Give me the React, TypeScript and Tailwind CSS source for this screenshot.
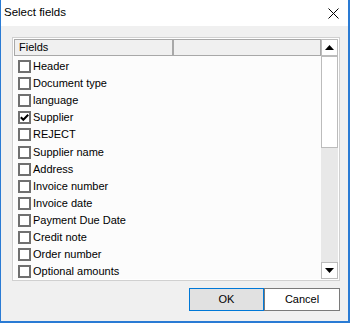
import React from 'react';

const fields = [
  { label: 'Header', checked: false },
  { label: 'Document type', checked: false },
  { label: 'language', checked: false },
  { label: 'Supplier', checked: true },
  { label: 'REJECT', checked: false },
  { label: 'Supplier name', checked: false },
  { label: 'Address', checked: false },
  { label: 'Invoice number', checked: false },
  { label: 'Invoice date', checked: false },
  { label: 'Payment Due Date', checked: false },
  { label: 'Credit note', checked: false },
  { label: 'Order number', checked: false },
  { label: 'Optional amounts', checked: false },
];

function CheckBox({ checked }: { checked: boolean }) {
  return (
    <div className="w-[13px] h-[13px] shrink-0 border-2 border-[#707070] bg-white flex items-center justify-center">
      {checked && (
        <svg width="9" height="9" viewBox="0 0 9 9">
          <path d="M0.8 4.3 L3.3 6.8 L8.2 1.8" fill="none" stroke="#000" strokeWidth="2" />
        </svg>
      )}
    </div>
  );
}

function ScrollButton({ up }: { up: boolean }) {
  return (
    <div className="h-[17px] border border-[#bcbcbc] bg-white flex items-center justify-center shrink-0">
      <svg width="9" height="5" viewBox="0 0 9 5">
        {up ? <polygon points="0,5 9,5 4.5,0" fill="#000" /> : <polygon points="0,0 9,0 4.5,5" fill="#000" />}
      </svg>
    </div>
  );
}

export default function App() {
  return (
    <div
      className="w-[350px] h-[323px] flex flex-col bg-[#f0f0f0] border-l border-r-2 border-b-2 border-[#2a7bd4] text-black"
      style={{ fontFamily: '"Liberation Sans", Arial, sans-serif' }}
    >
      {/* Title bar */}
      <div className="h-[26px] bg-white flex items-center justify-between pl-[3px] pr-[9px] shrink-0">
        <span className="text-[11.5px] leading-none">Select fields</span>
        <svg width="11" height="11" viewBox="0 0 11 11">
          <path d="M0.5 0.5 L10.5 10.5 M10.5 0.5 L0.5 10.5" stroke="#000" strokeWidth="1" />
        </svg>
      </div>

      <div className="flex flex-col pt-[11px] pl-[11px] pr-[8px]">
        {/* List box */}
        <div className="h-[244px] border border-[#d0d0d0] bg-white p-[1px] flex">
          <div className="flex-1 flex flex-col overflow-hidden">
            <div className="h-[17px] flex border border-[#a8a8a8] bg-[#f0f0f0] shrink-0">
              <div className="w-[159px] border-r-2 border-[#a8a8a8] pl-[4px] text-[11px] leading-[15px]">Fields</div>
              <div className="flex-1" />
            </div>
            <div className="flex flex-col pt-[2px] pl-[4px] bg-[#fcfcfc] flex-1">
              {fields.map((f) => (
                <div key={f.label} className="h-[17.1px] flex items-center shrink-0">
                  <CheckBox checked={f.checked} />
                  <span className="ml-[2px] text-[11px] leading-none whitespace-nowrap">{f.label}</span>
                </div>
              ))}
            </div>
          </div>
          <div className="w-[17px] flex flex-col bg-[#e8e8e8]">
            <ScrollButton up />
            <div className="h-[92px] border border-[#bcbcbc] bg-white shrink-0" />
            <div className="flex-1" />
            <ScrollButton up={false} />
          </div>
        </div>

        {/* Buttons */}
        <div className="flex justify-end mt-[7px]">
          <button className="w-[75px] h-[23px] border border-[#0078d7] bg-[#e1e1e1] text-[11px]">OK</button>
          <button className="w-[76px] h-[23px] border border-[#7a7a7a] bg-white text-[11px]">Cancel</button>
        </div>
      </div>
    </div>
  );
}
